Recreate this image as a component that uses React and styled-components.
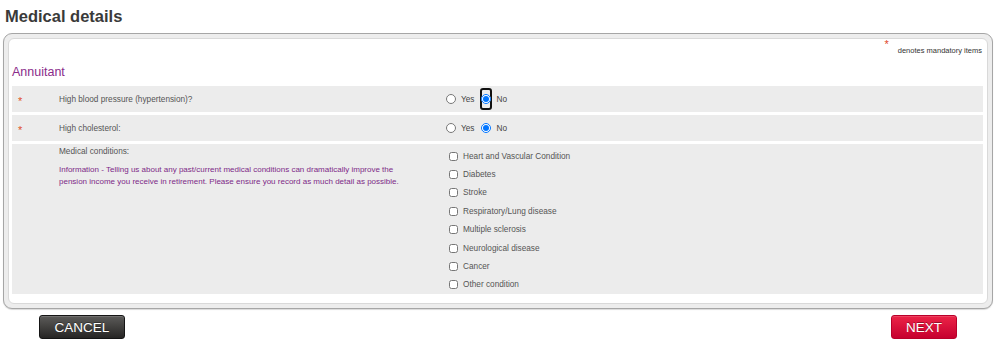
import React from "react";
import styled, { createGlobalStyle } from "styled-components";

const Global = createGlobalStyle`
  html, body { margin: 0; padding: 0; background: #fff; }
  body { font-family: "Liberation Sans", Arial, sans-serif; color: #444; }
`;

const Page = styled.div`
  width: 998px;
  padding: 0 5px 0 3px;
  box-sizing: border-box;
`;

const Title = styled.h1`
  margin: 0;
  padding: 5px 0 0 2px;
  height: 33px;
  box-sizing: border-box;
  font-size: 16.5px;
  line-height: 22px;
  font-weight: bold;
  color: #3a3a3a;
`;

const Outer = styled.div`
  border: 1px solid #a6a6a6;
  border-radius: 9px;
  background: #ededed;
  padding: 4px;
  box-shadow: 0 1px 1px rgba(0, 0, 0, 0.15);
`;

const Inner = styled.div`
  background: #fff;
  border: 1px solid #d9d9d9;
  border-radius: 6px;
  padding: 0 4px 9px 3px;
`;

const MandatoryNote = styled.div`
  display: flex;
  justify-content: flex-end;
  align-items: flex-start;
  height: 21px;
  padding-right: 1px;
  font-size: 7.5px;
  color: #333;
`;

const NoteStar = styled.span`
  color: #e0452a;
  font-size: 11px;
  line-height: 11px;
  margin-right: 9px;
`;

const NoteText = styled.span`
  margin-top: 7px;
`;

const Section = styled.h2`
  margin: 0;
  height: 26px;
  font-size: 12.5px;
  font-weight: normal;
  line-height: 24px;
  color: #8a2b8a;
`;

const Rows = styled.div`
  display: flex;
  flex-direction: column;
  gap: 3px;
`;

const Row = styled.div`
  display: grid;
  grid-template-columns: 47px 387px 1fr;
  align-items: ${(p) => (p.$top ? "start" : "center")};
  min-height: 26px;
  background: #ececec;
  font-size: 8.25px;
  color: #555;
`;

const Star = styled.span`
  color: #e0502a;
  font-size: 11px;
  padding-left: 6px;
  padding-top: 3px;
`;

const Label = styled.div`
  color: #555;
`;

const LabelBlock = styled.div`
  padding-top: 3px;
  line-height: 10px;
`;

const Info = styled.p`
  margin: 7px 0 0;
  width: 340px;
  font-size: 8px;
  line-height: 12px;
  color: #7d2a87;
`;

const Controls = styled.div`
  display: flex;
  align-items: center;
`;

const Choice = styled.label`
  display: flex;
  align-items: center;
  margin-right: ${(p) => (p.$gap ? p.$gap : 0)}px;
  color: #444;
`;

const Focus = styled.span`
  display: inline-flex;
  align-items: center;
  justify-content: center;
  box-sizing: border-box;
  width: 12px;
  height: 22px;
  margin: 0 4px 0 0;
  border: ${(p) => (p.$on ? "2px solid #111" : "2px solid transparent")};
  border-radius: 3px;
`;

const Radio = styled.input.attrs({ type: "radio" })`
  width: 10px;
  height: 10px;
  margin: 0;
  flex: none;
`;

const RadioPlain = styled(Radio)`
  margin-right: 5px;
`;

const CheckList = styled.div`
  display: flex;
  flex-direction: column;
  padding: 3px 0 0 3px;
`;

const CheckItem = styled.label`
  display: flex;
  align-items: center;
  height: 18.4px;
  color: #555;
`;

const Box = styled.input.attrs({ type: "checkbox" })`
  width: 9px;
  height: 9px;
  margin: 0 5px 0 0;
  flex: none;
`;

const Buttons = styled.div`
  display: flex;
  justify-content: space-between;
  padding: 6px 36px 0 36px;
`;

const Button = styled.button`
  height: 24px;
  padding: 0;
  width: ${(p) => p.$w}px;
  border-radius: 3px;
  font-family: "Liberation Sans", Arial, sans-serif;
  font-size: 13.5px;
  color: #fff;
  text-shadow: 0 -1px 0 rgba(0, 0, 0, 0.35);
  cursor: pointer;
  border: 1px solid ${(p) => (p.$red ? "#b8002a" : "#151515")};
  background: ${(p) =>
    p.$red
      ? "linear-gradient(#ec2447, #c6002f)"
      : "linear-gradient(#5c5b59, #262524)"};
  box-shadow: inset 0 1px 0 rgba(255, 255, 255, 0.15);
`;

const conditions = [
  "Heart and Vascular Condition",
  "Diabetes",
  "Stroke",
  "Respiratory/Lung disease",
  "Multiple sclerosis",
  "Neurological disease",
  "Cancer",
  "Other condition",
];

function YesNo({ name, focused }) {
  return (
    <Controls>
      <Choice $gap={6}>
        <RadioPlain name={name} />
        Yes
      </Choice>
      <Choice>
        <Focus $on={focused}>
          <Radio name={name} defaultChecked />
        </Focus>
        No
      </Choice>
    </Controls>
  );
}

export default function App() {
  return (
    <Page>
      <Global />
      <Title>Medical details</Title>
      <Outer>
        <Inner>
          <MandatoryNote>
            <NoteStar>*</NoteStar>
            <NoteText>denotes mandatory items</NoteText>
          </MandatoryNote>
          <Section>Annuitant</Section>
          <Rows>
            <Row>
              <Star>*</Star>
              <Label>High blood pressure (hypertension)?</Label>
              <YesNo name="bp" focused />
            </Row>
            <Row>
              <Star>*</Star>
              <Label>High cholesterol:</Label>
              <YesNo name="chol" />
            </Row>
            <Row $top>
              <span />
              <LabelBlock>
                <Label>Medical conditions:</Label>
                <Info>
                  Information - Telling us about any past/current medical
                  conditions can dramatically improve the pension income you
                  receive in retirement. Please ensure you record as much
                  detail as possible.
                </Info>
              </LabelBlock>
              <CheckList>
                {conditions.map((c) => (
                  <CheckItem key={c}>
                    <Box />
                    {c}
                  </CheckItem>
                ))}
              </CheckList>
            </Row>
          </Rows>
        </Inner>
      </Outer>
      <Buttons>
        <Button $w={86}>CANCEL</Button>
        <Button $w={66} $red>
          NEXT
        </Button>
      </Buttons>
    </Page>
  );
}
